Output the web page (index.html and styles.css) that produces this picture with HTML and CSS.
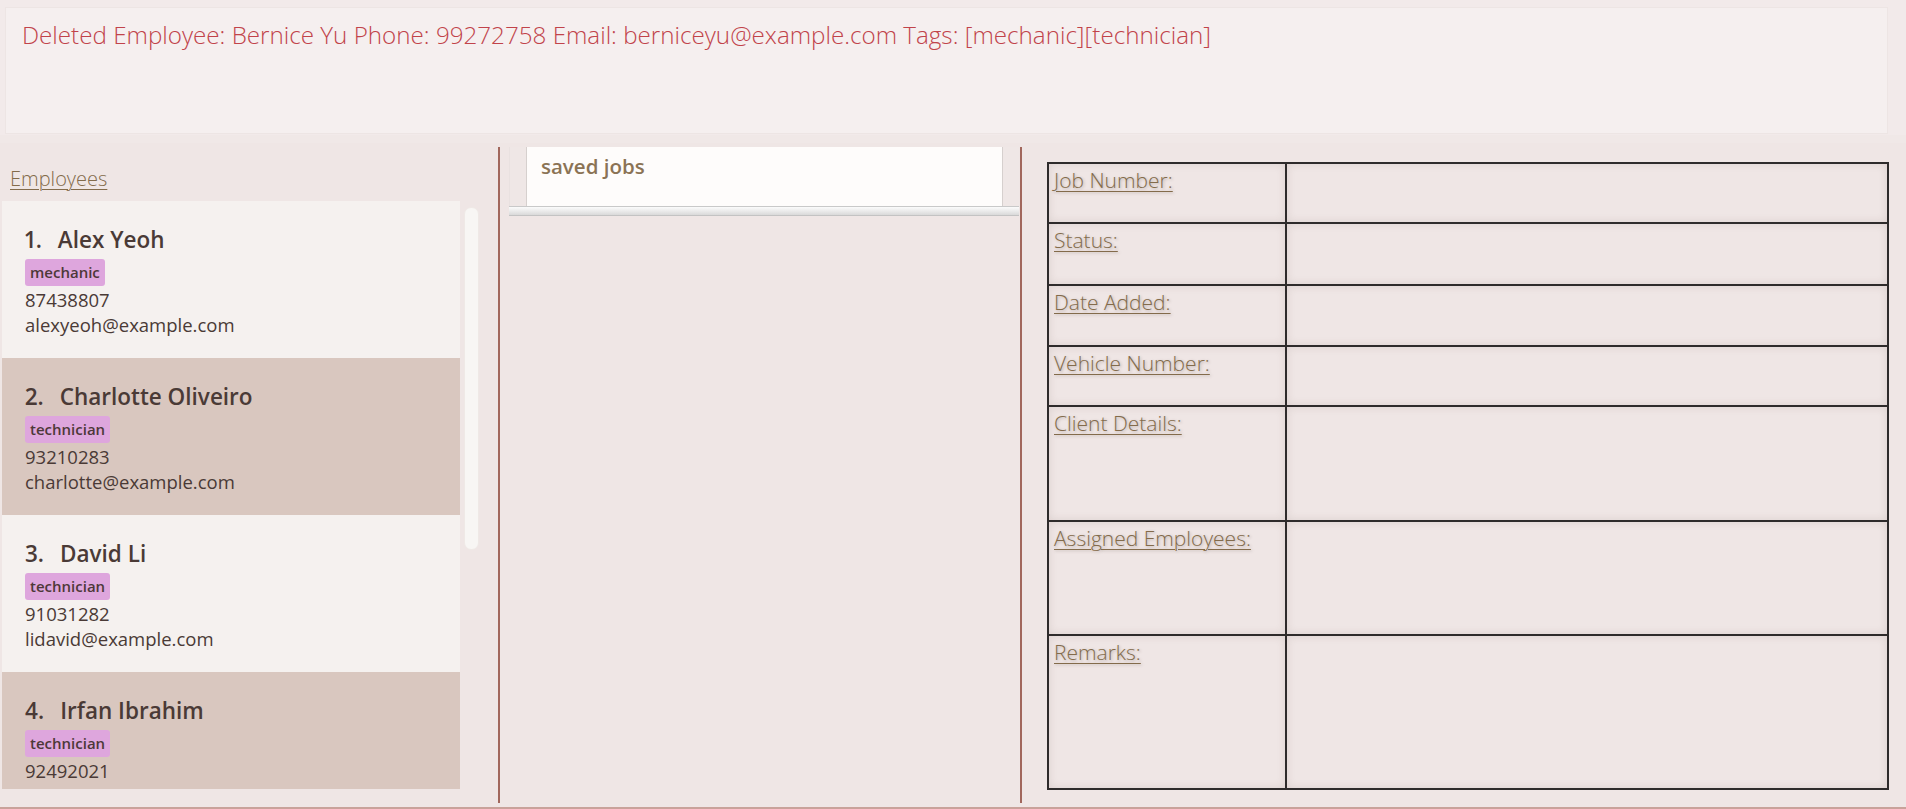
FILE: index.html
```html
<!DOCTYPE html>
<html>
<head>
<meta charset="utf-8">
<link rel="stylesheet" href="styles.css">
</head>
<body>
<div class="app">
  <div class="result-area">
    <div class="result-box">Deleted Employee: Bernice Yu Phone: 99272758 Email: berniceyu@example.com Tags: [mechanic][technician]</div>
  </div>
  <div class="main">
    <div class="col-left">
      <div class="section-label">Employees</div>
      <div class="list-row">
        <div class="emp-list">
          <div class="card odd">
            <div class="name"><span class="idx">1.</span>Alex Yeoh</div>
            <div class="tags"><span class="tag">mechanic</span></div>
            <div class="info">87438807</div>
            <div class="info">alexyeoh@example.com</div>
          </div>
          <div class="card even">
            <div class="name"><span class="idx">2.</span>Charlotte Oliveiro</div>
            <div class="tags"><span class="tag">technician</span></div>
            <div class="info">93210283</div>
            <div class="info">charlotte@example.com</div>
          </div>
          <div class="card odd">
            <div class="name"><span class="idx">3.</span>David Li</div>
            <div class="tags"><span class="tag">technician</span></div>
            <div class="info">91031282</div>
            <div class="info">lidavid@example.com</div>
          </div>
          <div class="card even">
            <div class="name"><span class="idx">4.</span>Irfan Ibrahim</div>
            <div class="tags"><span class="tag">technician</span></div>
            <div class="info">92492021</div>
          </div>
        </div>
        <div class="scrollbar"></div>
      </div>
    </div>
    <div class="divider"></div>
    <div class="col-mid">
      <div class="jobs-pane">
        <div class="jobs-row">
          <div class="gutter-l"></div>
          <div class="jobs-box"><div class="jobs-title">saved jobs</div></div>
          <div class="gutter-r"></div>
        </div>
        <div class="hbar"></div>
      </div>
    </div>
    <div class="divider"></div>
    <div class="col-right">
      <div class="detail-grid">
        <div class="cell r1"><span class="lbl">Job Number:</span></div><div class="cell r1"></div>
        <div class="cell r2"><span class="lbl">Status:</span></div><div class="cell r2"></div>
        <div class="cell r3"><span class="lbl">Date Added:</span></div><div class="cell r3"></div>
        <div class="cell r4"><span class="lbl">Vehicle Number:</span></div><div class="cell r4"></div>
        <div class="cell r5"><span class="lbl">Client Details:</span></div><div class="cell r5"></div>
        <div class="cell r6"><span class="lbl">Assigned Employees:</span></div><div class="cell r6"></div>
        <div class="cell r7"><span class="lbl">Remarks:</span></div><div class="cell r7"></div>
      </div>
    </div>
  </div>
</div>
</body>
</html>
```
FILE: styles.css
```css
* { box-sizing: border-box; }
html, body { margin: 0; padding: 0; }
body {
  background: #efe6e5;
  font-family: "Open Sans", "Noto Sans", sans-serif;
  overflow: hidden;
}
.app {
  width: 1906px;
  height: 809px;
  display: flex;
  flex-direction: column;
  border-bottom: 2px solid #c9a29a;
}
.result-area {
  height: 143px;
  background: #f2eaea;
  padding: 7px 18px 0 5px;
  border-bottom: 8px solid #f0e8e7;
}
.result-box {
  height: 127px;
  background: #f5efef;
  border: 1px solid #ede5e4;
  padding: 11px 16px;
  font-size: 24.2px;
  line-height: 32px;
  font-weight: 300;
  color: #c1434a;
  white-space: nowrap;
}
.main {
  flex: 1;
  display: flex;
}
.divider {
  width: 2px;
  margin: 4px 0;
  background: #a1675c;
}
.col-left {
  width: 498px;
  padding-top: 23px;
}
.section-label, .lbl {
  font-weight: 300;
  color: #836b4b;
  text-decoration: underline;
  text-underline-offset: 3px;
  text-decoration-thickness: 1px;
}
.section-label {
  margin-left: 10px;
  font-size: 20px;
  line-height: 26px;
}
.list-row {
  display: flex;
  margin-top: 9px;
  margin-left: 2px;
}
.emp-list {
  width: 458px;
  height: 588px;
  overflow: hidden;
}
.card {
  height: 157px;
  padding: 25px 0 0 23px;
  color: #4a3a36;
}
.card.odd { background: #f5f1ef; }
.card.even { background: #d9c7bf; }
.name {
  font-size: 22.5px;
  line-height: 28px;
  font-weight: 600;
}
.idx {
  display: inline-block;
  font-variant-numeric: proportional-nums;
  margin-right: 16px;
}
.tags {
  margin-top: 5px;
  display: flex;
  gap: 4px;
}
.tag {
  background: #dea6dd;
  border-radius: 3px;
  padding: 3px 5px;
  font-size: 15px;
  line-height: 21px;
  font-weight: 600;
  color: #4d3838;
}
.info {
  font-size: 18.5px;
  line-height: 25px;
  color: #4a3a36;
}
.tags + .info { margin-top: 1px; }
.scrollbar {
  width: 15px;
  height: 343px;
  margin: 6px 0 0 4px;
  background: #f8f6f4;
  border: 1px solid #efe9e6;
  border-radius: 7px;
}
.col-mid {
  width: 520px;
  padding: 4px 1px 0 9px;
}
.jobs-row {
  display: flex;
  height: 59px;
}
.gutter-l {
  width: 18px;
  background: #efe7e6;
  border-left: 1px solid #e9e1e0;
  border-right: 1px solid #d6d0ce;
}
.jobs-box {
  width: 475px;
  background: #fefcfb;
  padding: 6px 0 0 14px;
}
.jobs-title {
  font-size: 20.5px;
  line-height: 27px;
  font-weight: 600;
  color: #8b7355;
}
.gutter-r {
  flex: 1;
  background: #efe7e6;
  border-left: 1px solid #d6d0ce;
}
.hbar {
  height: 10px;
  border-top: 1px solid #c9c9c9;
  border-bottom: 1px solid #c3c3c3;
  background: linear-gradient(#fbfbfb, #e8e8e8 60%, #d9d9d9);
}
.col-right {
  flex: 1;
  padding: 19px 0 0 25px;
}
.detail-grid {
  width: 842px;
  display: grid;
  grid-template-columns: 236px 1fr;
  grid-template-rows: 58px 60px 59px 58px 113px 112px 152px;
  gap: 2px;
  padding: 2px;
  background: #2e2b2b;
}
.cell {
  background: #efe6e5;
  box-shadow: inset 0 0 8px rgba(80, 50, 40, 0.12);
  padding: 3px 5px;
}
.lbl {
  font-size: 21px;
  line-height: 27px;
  text-shadow: 1px 1px 3px rgba(60, 40, 30, 0.3);
}
```
